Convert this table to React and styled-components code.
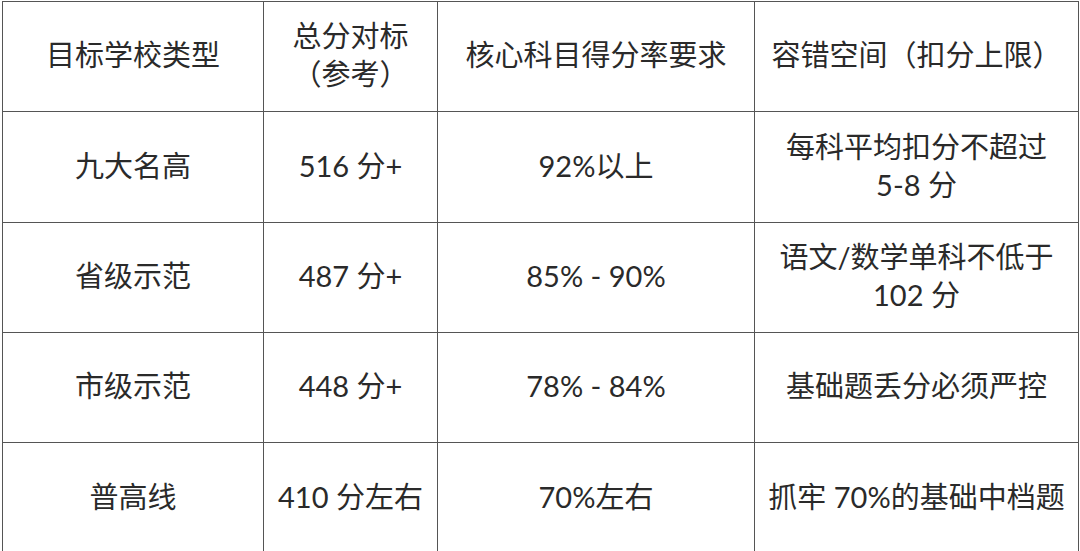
import React from 'react';
import styled, { createGlobalStyle } from 'styled-components';

const GlobalStyle = createGlobalStyle`
    html, body {
        margin: 0;
        padding: 0;
        background: #ffffff;
    }
    body {
        font-family: "Lato", "Noto Sans CJK SC", sans-serif;
        overflow: hidden;
    }
`;

const columns = [261, 174, 317, 324];

const headers = [
    ['目标学校类型'],
    ['总分对标', '（参考）'],
    ['核心科目得分率要求'],
    ['容错空间（扣分上限）'],
];

const rows = [
    { height: 111, cells: [['九大名高'], ['516 分+'], ['92%以上'], ['每科平均扣分不超过', '5-8 分']] },
    { height: 110, cells: [['省级示范'], ['487 分+'], ['85% - 90%'], ['语文/数学单科不低于', '102 分']] },
    { height: 110, cells: [['市级示范'], ['448 分+'], ['78% - 84%'], ['基础题丢分必须严控']] },
    { height: 112, cells: [['普高线'], ['410 分左右'], ['70%左右'], ['抓牢 70%的基础中档题']] },
];

const App = () => {
    return (
        <Page>
            <GlobalStyle />
            <Table>
                <colgroup>
                    {columns.map((w, idx) => (
                        <col key={idx} style={{ width: w }} />
                    ))}
                </colgroup>
                <thead>
                    <Row $height={110}>
                        {headers.map((lines, idx) => (
                            <Cell key={idx}>
                                {lines.map((line, i) => (
                                    <Line key={i}>{line}</Line>
                                ))}
                            </Cell>
                        ))}
                    </Row>
                </thead>
                <tbody>
                    {rows.map((row, idx) => (
                        <Row key={idx} $height={row.height}>
                            {row.cells.map((lines, i) => (
                                <Cell key={i}>
                                    {lines.map((line, j) => (
                                        <Line key={j}>{line}</Line>
                                    ))}
                                </Cell>
                            ))}
                        </Row>
                    ))}
                </tbody>
            </Table>
        </Page>
    );
};

export default App;

const Page = styled.div`
    padding: 1px 0 0 2px;
    width: 1080px;
    height: 551px;
    box-sizing: border-box;
`;

const Table = styled.table`
    width: 1076px;
    border-collapse: collapse;
    table-layout: fixed;
`;

const Row = styled.tr`
    height: ${(props) => props.$height}px;
`;

const Cell = styled.td`
    border: 1px solid #555;
    padding: 0 0 3px;
    text-align: center;
    vertical-align: middle;
    font-size: 29px;
    line-height: 38px;
    color: #2a2a2a;
    white-space: nowrap;
`;

const Line = styled.div`
    display: block;
`;
